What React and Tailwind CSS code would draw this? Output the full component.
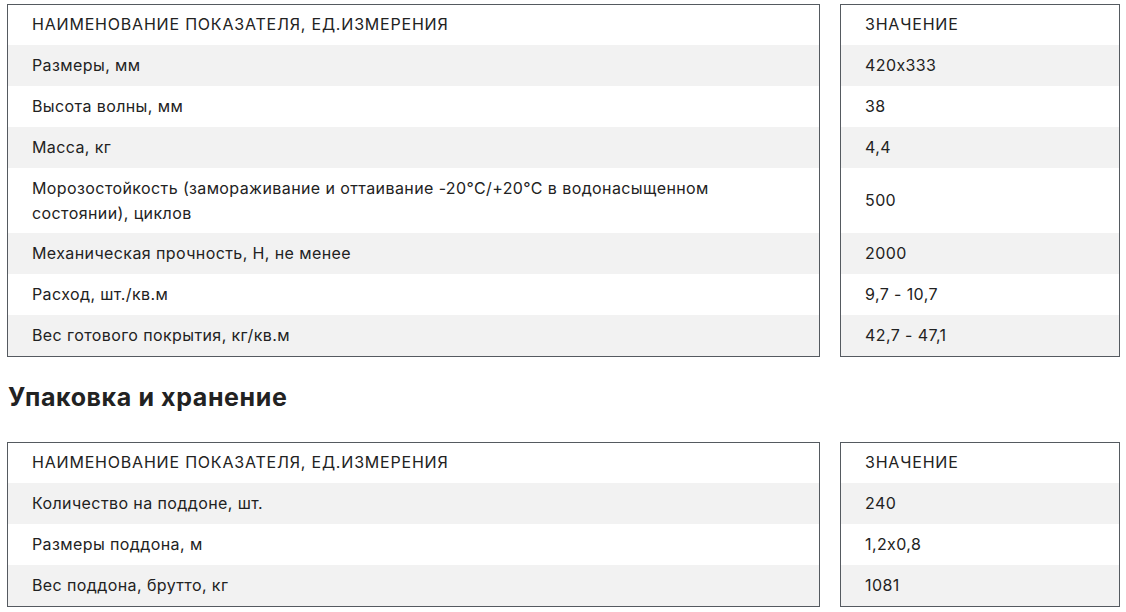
export default function App() {
  const font = { fontFamily: "Inter, 'Noto Sans', sans-serif", fontFeatureSettings: "'calt' 0" };
  const rows1 = [
    ["Размеры, мм", "420x333"],
    ["Высота волны, мм", "38"],
    ["Масса, кг", "4,4"],
    [
      <>
        Морозостойкость (замораживание и оттаивание -20°С/+20°С в водонасыщенном
        <br />
        состоянии), циклов
      </>,
      "500",
    ],
    ["Механическая прочность, Н, не менее", "2000"],
    ["Расход, шт./кв.м", "9,7 - 10,7"],
    ["Вес готового покрытия, кг/кв.м", "42,7 - 47,1"],
  ];
  const rows2 = [
    ["Количество на поддоне, шт.", "240"],
    ["Размеры поддона, м", "1,2x0,8"],
    ["Вес поддона, брутто, кг", "1081"],
  ];

  const cell = "px-6 flex items-center text-[16px] tracking-[0.4px] leading-[25px] text-[#222]";

  const Table = ({ rows }) => (
    <div className="flex gap-5">
      <div className="w-[813px] border border-[#555a60]">
        <div className={`${cell} h-[40px] pb-px tracking-[0.8px]`}>НАИМЕНОВАНИЕ ПОКАЗАТЕЛЯ, ЕД.ИЗМЕРЕНИЯ</div>
        {rows.map((r, i) => (
          <div
            key={i}
            className={`${cell} ${typeof r[0] !== "string" ? "h-[65px]" : "h-[41px]"} ${i % 2 === 0 ? "bg-[#f2f2f2]" : "bg-white"}`}
          >
            <div>{r[0]}</div>
          </div>
        ))}
      </div>
      <div className="w-[280px] border border-[#555a60]">
        <div className={`${cell} h-[40px] pb-px tracking-[0.8px]`}>ЗНАЧЕНИЕ</div>
        {rows.map((r, i) => (
          <div
            key={i}
            className={`${cell} ${typeof r[0] !== "string" ? "h-[65px]" : "h-[41px]"} ${i % 2 === 0 ? "bg-[#f2f2f2]" : "bg-white"}`}
          >
            {r[1]}
          </div>
        ))}
      </div>
    </div>
  );

  return (
    <div className="bg-white w-[1126px] h-[612px] pl-[7px] pt-1" style={font}>
      <Table rows={rows1} />
      <h2 className="text-[25px] tracking-[0.6px] font-bold text-[#222] leading-[30px] mt-[25px] mb-[30px] pl-px">
        Упаковка и хранение
      </h2>
      <Table rows={rows2} />
    </div>
  );
}
